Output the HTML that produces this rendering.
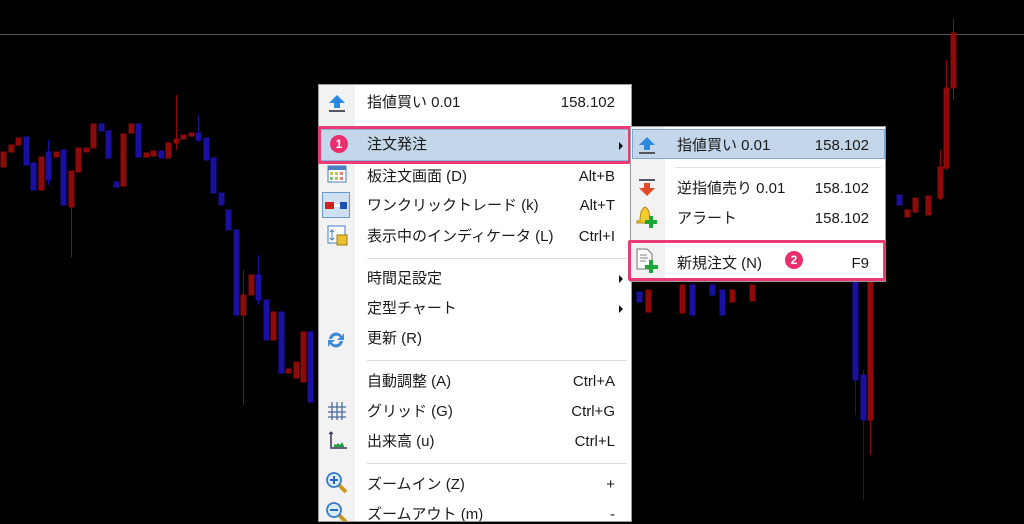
<!DOCTYPE html>
<html><head><meta charset="utf-8"><style>
*{margin:0;padding:0;box-sizing:border-box}
body{width:1024px;height:524px;background:#000;position:relative;overflow:hidden;font-family:"Liberation Sans","Noto Sans CJK JP",sans-serif;font-size:15px;color:#1a1a1a}
.abs{position:absolute}
.menu{position:absolute;left:318px;top:84px;width:314px;height:438px;background:#fff;border:1px solid #999;overflow:hidden}
.gut{position:absolute;left:0;top:0;width:36px;height:100%;background:#f2f2f2}
.it{position:absolute;left:48px;height:24px;line-height:24px;white-space:nowrap}
.sc{position:absolute;right:16px;height:24px;line-height:24px;text-align:right}
.sep{position:absolute;left:48px;right:4px;height:1px;background:#ddd}
.arr{position:absolute;right:8px;width:0;height:0;border-left:4px solid #111;border-top:4px solid transparent;border-bottom:4px solid transparent}
.pink{position:absolute;border:3px solid #ea3b72;border-radius:2px}
.badge{position:absolute;width:18px;height:18px;border-radius:9px;background:#ea2f6c;color:#fff;font-size:12px;font-weight:bold;text-align:center;line-height:18px}
.sub{position:absolute;left:630px;top:126px;width:256px;height:156px;background:#fff;border:1px solid #999}
</style></head><body>
<svg class="abs" style="left:0;top:0" width="1024" height="524">
<line x1="0" y1="34.5" x2="1024" y2="34.5" stroke="#555" stroke-width="1"/>
<g stroke-width="1">
<g fill="#8c0a0a" stroke="#8c0a0a">
<rect x="1" y="152" width="5" height="15"/><rect x="9" y="145" width="5" height="7"/><rect x="16" y="138" width="5" height="7"/>
<rect x="39" y="157" width="5" height="33"/><rect x="54" y="152" width="5" height="5"/><rect x="69" y="171" width="5" height="36"/><line x1="71.5" y1="207" x2="71.5" y2="257"/>
<rect x="76" y="148" width="5" height="24"/><rect x="84" y="148" width="5" height="4"/><rect x="91" y="124" width="5" height="24"/>
<rect x="121" y="134" width="5" height="52"/><rect x="129" y="124" width="5" height="9"/><rect x="144" y="153" width="5" height="4"/><rect x="151" y="151" width="5" height="5"/>
<rect x="166" y="143" width="5" height="15"/><rect x="174" y="139" width="5" height="4"/><line x1="176.5" y1="95" x2="176.5" y2="150"/><rect x="181" y="135" width="5" height="4"/><rect x="189" y="133" width="5" height="3"/>
<rect x="241" y="295" width="5" height="20"/><line x1="243.5" y1="270" x2="243.5" y2="405"/><rect x="249" y="275" width="5" height="20"/><rect x="271" y="312" width="5" height="28"/>
<rect x="286" y="369" width="5" height="4"/><rect x="294" y="362" width="5" height="16"/><rect x="301" y="332" width="5" height="50"/>
<rect x="646" y="290" width="5" height="22"/><rect x="680" y="285" width="5" height="28"/><rect x="730" y="290" width="5" height="12"/><rect x="750" y="285" width="5" height="16"/>
<rect x="868" y="280" width="5" height="140"/><line x1="870.5" y1="270" x2="870.5" y2="455"/>
<rect x="905" y="210" width="5" height="7"/><rect x="913" y="198" width="5" height="14"/><rect x="926" y="196" width="5" height="19"/><rect x="938" y="167" width="5" height="31"/><line x1="940.5" y1="150" x2="940.5" y2="200"/>
<rect x="944" y="88" width="5" height="80"/><line x1="946.5" y1="60" x2="946.5" y2="170"/><rect x="951" y="33" width="5" height="55"/><line x1="953.5" y1="18" x2="953.5" y2="100"/>
</g>
<g fill="#1a10a0" stroke="#1a10a0">
<rect x="24" y="137" width="5" height="28"/><rect x="31" y="163" width="5" height="27"/><rect x="46" y="152" width="5" height="28"/><line x1="48.5" y1="140" x2="48.5" y2="185"/>
<rect x="61" y="150" width="5" height="55"/><rect x="99" y="124" width="5" height="7"/><rect x="106" y="131" width="5" height="27"/><rect x="114" y="182" width="5" height="5"/>
<rect x="136" y="124" width="5" height="33"/><rect x="159" y="151" width="5" height="7"/><rect x="196" y="133" width="5" height="7"/><line x1="198.5" y1="115" x2="198.5" y2="142"/>
<rect x="204" y="138" width="5" height="22"/><rect x="211" y="158" width="5" height="35"/><rect x="219" y="193" width="5" height="12"/><rect x="226" y="210" width="5" height="20"/>
<rect x="234" y="230" width="5" height="85"/><rect x="256" y="275" width="5" height="25"/><line x1="258.5" y1="255" x2="258.5" y2="305"/><rect x="264" y="300" width="5" height="40"/>
<rect x="279" y="312" width="5" height="61"/><rect x="308" y="332" width="5" height="70"/>
<rect x="637" y="292" width="5" height="10"/><rect x="690" y="285" width="5" height="30"/><rect x="710" y="285" width="5" height="10"/><rect x="720" y="290" width="5" height="25"/>
<rect x="853" y="280" width="5" height="100"/><line x1="855.5" y1="270" x2="855.5" y2="415"/><rect x="861" y="375" width="5" height="45"/><line x1="863.5" y1="370" x2="863.5" y2="500"/>
<rect x="897" y="195" width="5" height="10"/>
</g>
</g>
</svg>

<div class="menu">
<div class="gut"></div>
<svg class="abs" style="left:7px;top:8px" width="22" height="20"><path d="M11 2 L19 10 H14 V15 H8 V10 H3 Z" fill="#2a8ae0"/><rect x="3" y="17" width="16" height="2" fill="#556"/></svg>
<div class="it" style="top:6px">指値買い 0.01</div><div class="sc" style="top:6px">158.102</div>
<div class="abs" style="left:1px;top:44px;width:310px;height:32px;background:#c3d6ea;border:1px solid #8fb0d6"></div>
<div class="it" style="top:48px">注文発注</div><div class="arr" style="top:57px"></div>
<svg class="abs" style="left:8px;top:80px" width="20" height="18"><rect x="1" y="1" width="18" height="16" fill="#fff" stroke="#4a7fc0"/><rect x="1" y="1" width="18" height="4" fill="#4a7fc0"/><g fill="#c8c060"><rect x="3" y="7" width="3" height="3"/><rect x="8" y="7" width="3" height="3"/><rect x="13" y="7" width="3" height="3" fill="#e08080"/><rect x="3" y="12" width="3" height="3" fill="#80c080"/><rect x="8" y="12" width="3" height="3"/><rect x="13" y="12" width="3" height="3" fill="#e08080"/></g></svg>
<div class="it" style="top:80px">板注文画面 (D)</div><div class="sc" style="top:80px">Alt+B</div>
<div class="abs" style="left:3px;top:107px;width:28px;height:26px;background:#cfe0f3;border:1px solid #6a9ad0"></div>
<svg class="abs" style="left:6px;top:113px" width="22" height="14"><rect x="0" y="4" width="9" height="7" fill="#d02020"/><rect x="9" y="6" width="6" height="3" fill="#fff"/><rect x="15" y="4" width="7" height="7" fill="#2050b0"/></svg>
<div class="it" style="top:109px">ワンクリックトレード (k)</div><div class="sc" style="top:109px">Alt+T</div>
<svg class="abs" style="left:8px;top:140px" width="22" height="22"><rect x="1" y="1" width="17" height="17" fill="#fff" stroke="#4a7fc0"/><path d="M5 5 V15 M3 7 L5 5 L7 7 M3 13 L5 15 L7 13" stroke="#4a7fc0" fill="none"/><rect x="10" y="10" width="10" height="10" fill="#e8c030" stroke="#a08010"/></svg>
<div class="it" style="top:140px">表示中のインディケータ (L)</div><div class="sc" style="top:140px">Ctrl+I</div>
<div class="sep" style="top:173px"></div>
<div class="it" style="top:182px">時間足設定</div><div class="arr" style="top:190px"></div>
<div class="it" style="top:212px">定型チャート</div><div class="arr" style="top:220px"></div>
<svg class="abs" style="left:6px;top:244px" width="22" height="22"><path d="M4 10 A7 7 0 0 1 17 7 L19 4 V11 H12 L15 8.5 A4.5 4.5 0 0 0 7 10 Z M18 12 A7 7 0 0 1 5 15 L3 18 V11 H10 L7 13.5 A4.5 4.5 0 0 0 15 12 Z" fill="#3a8ad8"/></svg>
<div class="it" style="top:242px">更新 (R)</div>
<div class="sep" style="top:275px"></div>
<div class="it" style="top:285px">自動調整 (A)</div><div class="sc" style="top:285px">Ctrl+A</div>
<svg class="abs" style="left:8px;top:316px" width="20" height="20"><path d="M5 1 V19 M10 1 V19 M15 1 V19 M1 6 H19 M1 11 H19 M1 16 H19" stroke="#4a6a9a" stroke-width="1.3"/></svg>
<div class="it" style="top:315px">グリッド (G)</div><div class="sc" style="top:315px">Ctrl+G</div>
<svg class="abs" style="left:8px;top:345px" width="22" height="22"><path d="M4 2 V18 H20" stroke="#335" fill="none" stroke-width="1.5"/><path d="M2 4 L4 2 L6 4" stroke="#335" fill="none"/><path d="M7 17 V14 L9 15 L11 13 L13 15 L15 12 L17 16 V17 Z" fill="#20a040"/></svg>
<div class="it" style="top:345px">出来高 (u)</div><div class="sc" style="top:345px">Ctrl+L</div>
<div class="sep" style="top:378px"></div>
<svg class="abs" style="left:6px;top:386px" width="24" height="24"><line x1="13" y1="13" x2="21" y2="21" stroke="#c89a20" stroke-width="4"/><circle cx="9" cy="9" r="7" fill="#d8ecfb" stroke="#3a7ac8" stroke-width="1.8"/><path d="M5 9 H13 M9 5 V13" stroke="#2a6ab8" stroke-width="2"/></svg>
<div class="it" style="top:388px">ズームイン (Z)</div><div class="sc" style="top:388px">+</div>
<svg class="abs" style="left:6px;top:416px" width="24" height="24"><line x1="13" y1="13" x2="21" y2="21" stroke="#c89a20" stroke-width="4"/><circle cx="9" cy="9" r="7" fill="#d8ecfb" stroke="#3a7ac8" stroke-width="1.8"/><path d="M5 9 H13" stroke="#2a6ab8" stroke-width="2"/></svg>
<div class="it" style="top:418px">ズームアウト (m)</div><div class="sc" style="top:418px">-</div>
</div>
<div class="pink" style="left:318px;top:126px;width:313px;height:38px"></div>
<div class="badge" style="left:330px;top:135px">1</div>

<div class="sub">
<div class="gut" style="width:34px"></div>
<div class="abs" style="left:1px;top:2px;width:253px;height:30px;background:#c3d6ea;border:1px solid #7fa6d2"></div>
<svg class="abs" style="left:5px;top:8px" width="22" height="20"><path d="M11 2 L19 10 H14 V15 H8 V10 H3 Z" fill="#2a8ae0"/><rect x="3" y="17" width="16" height="2" fill="#556"/></svg>
<div class="it" style="left:46px;top:7px">指値買い 0.01</div><div class="sc" style="top:7px">158.102</div>
<div class="sep" style="left:44px;top:40px;background:#e2e2e2"></div>
<svg class="abs" style="left:5px;top:51px" width="22" height="20"><rect x="3" y="1" width="16" height="2" fill="#556"/><path d="M11 18 L19 10 H14 V5 H8 V10 H3 Z" fill="#e04a28"/></svg>
<div class="it" style="left:46px;top:50px">逆指値売り 0.01</div><div class="sc" style="top:50px">158.102</div>
<svg class="abs" style="left:3px;top:77px" width="26" height="26"><path d="M6 17 Q6 5 11 3 Q16 5 16 17 H19 V19 H3 V17 Z" fill="#f0cc30" stroke="#b08a10"/><path d="M17 12 V24 M11 18 H23" stroke="#1aa838" stroke-width="4"/></svg>
<div class="it" style="left:46px;top:80px">アラート</div><div class="sc" style="top:80px">158.102</div>
<svg class="abs" style="left:3px;top:120px" width="26" height="28"><path d="M3 2 H13 L18 7 V22 H3 Z" fill="#fafafa" stroke="#777"/><path d="M6 8 H13 M6 11 H14 M6 14 H12" stroke="#888"/><path d="M17 13 V26 M11 20 H24" stroke="#1aa838" stroke-width="4"/></svg>
<div class="it" style="left:46px;top:125px">新規注文 (N)</div><div class="sc" style="top:125px">F9</div>
</div>
<div class="pink" style="left:628px;top:240px;width:258px;height:41px"></div>
<div class="badge" style="left:785px;top:251px">2</div>
</body></html>
